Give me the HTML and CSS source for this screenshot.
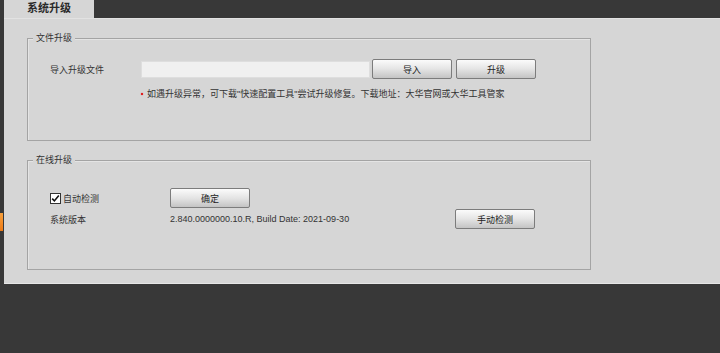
FILE: index.html
```html
<!DOCTYPE html>
<html lang="zh-CN">
<head>
    <meta charset="UTF-8">
    <title>系统升级</title>
    <link rel="stylesheet" href="styles.css">
</head>
<body>
    <div class="page">
        <div class="side">
            <div class="side-mark"></div>
        </div>
        <div class="main">
            <div class="tab-bar">
                <div class="tab">系统升级</div>
            </div>
            <div class="panel">
                <div class="group group-file">
                    <div class="group-title">文件升级</div>
                    <div class="row row-import">
                        <span class="label label-wide">导入升级文件</span>
                        <input class="file-input" type="text">
                        <button class="btn">导入</button>
                        <button class="btn btn-upgrade">升级</button>
                    </div>
                    <div class="notice">
                        <span class="notice-dot"></span>
                        <span>如遇升级异常，可下载"快速配置工具"尝试升级修复。下载地址：大华官网或大华工具管家</span>
                    </div>
                </div>

                <div class="group group-online">
                    <div class="group-title">在线升级</div>
                    <div class="row row-auto">
                        <label class="check label">
                            <svg class="check-box" width="11" height="11" viewBox="0 0 11 11">
                                <rect x="0.5" y="0.5" width="10" height="10" fill="#fff" stroke="#333"/>
                                <path d="M2.2 5.6 L4.4 7.9 L8.8 2.6" fill="none" stroke="#111" stroke-width="1.6"/>
                            </svg>
                            自动检测
                        </label>
                        <button class="btn">确定</button>
                    </div>
                    <div class="row row-version">
                        <span class="label">系统版本</span>
                        <span class="version">2.840.0000000.10.R, Build Date: 2021-09-30</span>
                        <button class="btn">手动检测</button>
                    </div>
                </div>
            </div>
        </div>
    </div>
</body>
</html>
```

FILE: styles.css
```css
body {
    margin: 0;
    background: #383838;
    font-family: "Liberation Sans", "Noto Sans CJK SC", sans-serif;
    font-size: 9px;
    color: #333;
}

.page {
    display: flex;
}

.side {
    width: 4px;
    flex-shrink: 0;
}

.side-mark {
    margin-top: 213px;
    width: 3px;
    height: 18px;
    background: linear-gradient(#f7a03c, #ee7a14);
}

.main {
    flex: 1;
}

.tab-bar {
    height: 18px;
    display: flex;
}

.tab {
    width: 90px;
    background: #d6d6d6;
    padding-left: 23px;
    box-sizing: border-box;
    font-size: 11px;
    font-weight: bold;
    line-height: 17px;
    color: #2a2a2a;
}

.panel {
    height: 266px;
    box-sizing: border-box;
    background: #d6d6d6;
    border-top: 1px solid #e2e2e2;
    border-bottom: 1px solid #e6e6e6;
    padding: 19px 0 0 23px;
}

/* rama grupy z tytułem na linii */
.group {
    width: 564px;
    box-sizing: border-box;
    border: 1px solid #a4a4a4;
    box-shadow: inset 1px 1px 0 #e4e4e4;
    padding-left: 22px;
}

.group-file {
    height: 103px;
}

.group-online {
    height: 110px;
    margin-top: 19px;
}

.group-title {
    width: fit-content;
    margin: -7px 0 0 -17px;
    padding: 0 3px;
    line-height: 12px;
    background: #d6d6d6;
}

.row {
    display: flex;
    align-items: center;
    height: 20px;
}

.row-import {
    margin-top: 15px;
}

.label {
    width: 120px;
    flex-shrink: 0;
}

.label-wide {
    width: 91px;
}

.file-input {
    width: 229px;
    height: 17px;
    box-sizing: border-box;
    margin: 0 2px 0 0;
    border: 1px solid #dedede;
    background: #f0f0f0;
    outline: none;
}

.btn {
    width: 80px;
    height: 20px;
    box-sizing: border-box;
    padding: 0;
    border: 1px solid #7c7c7c;
    border-radius: 2px;
    background: linear-gradient(#fbfbfb, #e4e4e4 50%, #c4c4c4);
    font-family: inherit;
    font-size: 9px;
    color: #222;
}

.btn-upgrade {
    margin-left: 4px;
}

.notice {
    display: flex;
    align-items: center;
    margin: 8px 0 0 91px;
    line-height: 14px;
}

.notice-dot {
    width: 2px;
    height: 2px;
    margin-right: 4px;
    background: #e02020;
    box-shadow: 0 0 1px #e02020;
}

.row-auto {
    margin-top: 22px;
}

.row-version {
    margin-top: 1px;
}

.check {
    display: flex;
    align-items: center;
    gap: 2px;
}

.check-box {
    flex-shrink: 0;
}

.version {
    width: 285px;
    flex-shrink: 0;
}
```
